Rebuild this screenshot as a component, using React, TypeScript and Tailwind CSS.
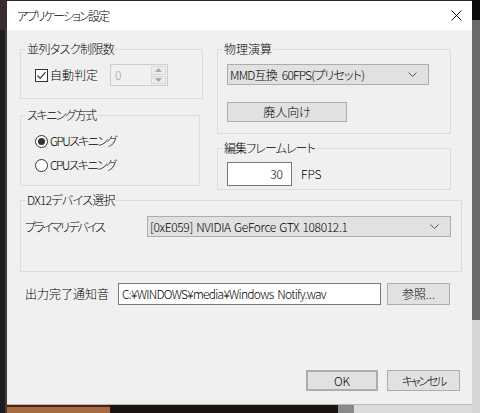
import type { ReactNode } from "react";

function Group({
  title,
  titleClass = "",
  className,
  children,
}: {
  title: string;
  titleClass?: string;
  className: string;
  children: ReactNode;
}) {
  return (
    <div className={`relative border border-[#dcdcdc] ${className}`}>
      <span
        className={`absolute -top-[9px] left-[5px] whitespace-nowrap bg-[#f0f0f0] px-[1px] leading-[16px] ${titleClass}`}
      >
        {title}
      </span>
      {children}
    </div>
  );
}

function Chevron() {
  return (
    <svg width="9" height="5" viewBox="0 0 9 5" className="shrink-0">
      <path d="M0.5 0.5 L4.5 4.5 L8.5 0.5" fill="none" stroke="#555" strokeWidth="1" />
    </svg>
  );
}

function Combo({
  text,
  className,
  textClass = "",
}: {
  text: string;
  className: string;
  textClass?: string;
}) {
  return (
    <div
      className={`flex items-center justify-between border border-[#adadad] bg-[#e1e1e1] pl-[2px] pr-[11px] ${className}`}
    >
      <span className={`whitespace-nowrap leading-none ${textClass}`}>{text}</span>
      <Chevron />
    </div>
  );
}

function Button({ label, className }: { label: string; className: string }) {
  return (
    <div
      className={`flex items-center justify-center border border-[#adadad] bg-[#e1e1e1] leading-none ${className}`}
    >
      {label}
    </div>
  );
}

function Radio({ checked, label }: { checked: boolean; label: string }) {
  return (
    <div className="flex h-[16px] items-center">
      <div className="flex h-[13px] w-[13px] items-center justify-center rounded-full border border-[#333] bg-white">
        {checked && <div className="h-[7px] w-[7px] rounded-full bg-[#333]" />}
      </div>
      <span className="ml-[2px] leading-none tracking-[-1.6px]">{label}</span>
    </div>
  );
}

export default function App() {
  return (
    <div className="flex h-[413px] w-[480px] overflow-hidden bg-[#1a1614] font-['Noto_Sans_CJK_JP',sans-serif] text-[12px] font-light text-black [font-feature-settings:'palt']">
      {/* left edge of the app behind */}
      <div className="flex w-[7px] flex-col bg-[#2a2626]">
        <div className="h-[30px] bg-[#3a2c2c]" />
        <div className="flex-1 border-r-[2px] border-[#3c3c3c] bg-[#1e1e1e]" />
      </div>

      <div className="flex w-[465px] flex-col">
        <div className="h-[1px] bg-[#2a2222]" />

        {/* dialog */}
        <div className="flex h-[404px] flex-col border-b border-[#b8b8b8] bg-[#f0f0f0]">
          <div className="flex h-[29px] items-center justify-between bg-white pl-[10px] pr-[10px]">
            <span className="leading-none tracking-[-1.8px]">アプリケーション設定</span>
            <svg width="11" height="11" viewBox="0 0 11 11">
              <path d="M0.5 0.5 L10.5 10.5 M10.5 0.5 L0.5 10.5" stroke="#111" strokeWidth="1" />
            </svg>
          </div>

          <div className="flex flex-col pl-[13px] pt-[19px]">
            <div className="flex">
              {/* left column */}
              <div className="flex w-[183px] flex-col">
                <Group
                  title="並列タスク制限数"
                  titleClass="tracking-[-0.6px]"
                  className="h-[50px] w-[183px]"
                >
                  <div className="flex items-center pl-[14px] pt-[14px]">
                    <div className="flex w-[75px] items-center">
                      <div className="flex h-[13px] w-[13px] items-center justify-center border border-[#333] bg-white">
                        <svg width="11" height="11" viewBox="0 0 11 11">
                          <path d="M1.5 5.5 L4.2 8.3 L9.5 2.2" fill="none" stroke="#333" strokeWidth="1.2" />
                        </svg>
                      </div>
                      <span className="ml-[2px] leading-none">自動判定</span>
                    </div>
                    <div className="flex h-[22px] w-[58px] items-center border border-[#cccccc] bg-[#f0f0f0]">
                      <span className="flex-1 pl-[4px] leading-none text-[#a0a0a0]">0</span>
                      <div className="mr-[1px] flex h-[18px] w-[15px] flex-col gap-[1px]">
                        <div className="flex flex-1 items-center justify-center border border-[#d8d8d8] bg-[#ececec]">
                          <svg width="7" height="4" viewBox="0 0 7 4">
                            <path d="M0 4 L3.5 0 L7 4 Z" fill="#a8a8a8" />
                          </svg>
                        </div>
                        <div className="flex flex-1 items-center justify-center border border-[#d8d8d8] bg-[#ececec]">
                          <svg width="7" height="4" viewBox="0 0 7 4">
                            <path d="M0 0 L3.5 4 L7 0 Z" fill="#a8a8a8" />
                          </svg>
                        </div>
                      </div>
                    </div>
                  </div>
                </Group>

                <Group
                  title="スキニング方式"
                  titleClass="tracking-[-1.4px]"
                  className="mt-[16px] h-[71px] w-[180px]"
                >
                  <div className="flex flex-col gap-[8px] pl-[14px] pt-[17px]">
                    <Radio checked label="GPUスキニング" />
                    <Radio checked={false} label="CPUスキニング" />
                  </div>
                </Group>
              </div>

              {/* right column */}
              <div className="ml-[14px] flex w-[234px] flex-col">
                <Group title="物理演算" className="h-[85px] w-[234px]">
                  <div className="flex flex-col pl-[9px] pt-[14px]">
                    <Combo
                      text="MMD互換 60FPS(プリセット)"
                      textClass="tracking-[-0.8px] [word-spacing:3px]"
                      className="h-[21px] w-[202px]"
                    />
                    <Button label="廃人向け" className="mt-[17px] h-[20px] w-[120px]" />
                  </div>
                </Group>

                <Group
                  title="編集フレームレート"
                  titleClass="tracking-[-0.9px]"
                  className="mt-[14px] h-[42px] w-[234px]"
                >
                  <div className="flex items-center pl-[9px] pt-[13px]">
                    <div className="flex h-[24px] w-[65px] items-center justify-end border border-[#7a7a7a] bg-white pr-[8px] leading-none">
                      30
                    </div>
                    <span className="ml-[9px] leading-none">FPS</span>
                  </div>
                </Group>
              </div>
            </div>

            <Group
              title="DX12デバイス選択"
              titleClass="tracking-[-0.7px]"
              className="mt-[10px] h-[72px] w-[442px]"
            >
              <div className="flex items-center pl-[4px] pt-[15px]">
                <span className="w-[122px] leading-none tracking-[-1.9px]">プライマリデバイス</span>
                <Combo
                  text="[0xE059] NVIDIA GeForce GTX 108012.1"
                  textClass="tracking-[-0.35px] [word-spacing:1px]"
                  className="h-[21px] w-[304px]"
                />
              </div>
            </Group>

            <div className="mt-[11px] flex h-[22px] items-center">
              <span className="ml-[5px] w-[93px] leading-none">出力完了通知音</span>
              <div className="flex h-[22px] w-[263px] items-center border border-[#7a7a7a] bg-white pl-[3px] leading-none tracking-[-0.75px] [word-spacing:2px]">
                C:¥WINDOWS¥media¥Windows Notify.wav
              </div>
              <Button label="参照..." className="ml-[6px] h-[22px] w-[63px]" />
            </div>

            <div className="mt-[65px] flex justify-end gap-[9px] pr-[12px]">
              <Button label="OK" className="h-[21px] w-[72px] border-2 border-[#0078d7]" />
              <Button label="キャンセル" className="h-[21px] w-[73px] tracking-[-2.2px]" />
            </div>
          </div>
        </div>

        {/* bottom of the app behind */}
        <div className="flex h-[8px]">
          <div className="w-[103px] border-t-2 border-[#5a1c12] bg-[#a56c42]" />
          <div className="w-[228px] bg-[#1a1311]" />
          <div className="w-[16px] bg-[#8a8a8a]" />
          <div className="flex-1 bg-[#dcdcdc]" />
        </div>
      </div>

      {/* right edge of the app behind */}
      <div className="flex w-[8px] flex-col">
        <div className="h-[20px] bg-[#0c0c0c]" />
        <div className="h-[300px] bg-[#6a6a6a]" />
        <div className="flex-1 bg-[#d6d6d6]" />
      </div>
    </div>
  );
}
